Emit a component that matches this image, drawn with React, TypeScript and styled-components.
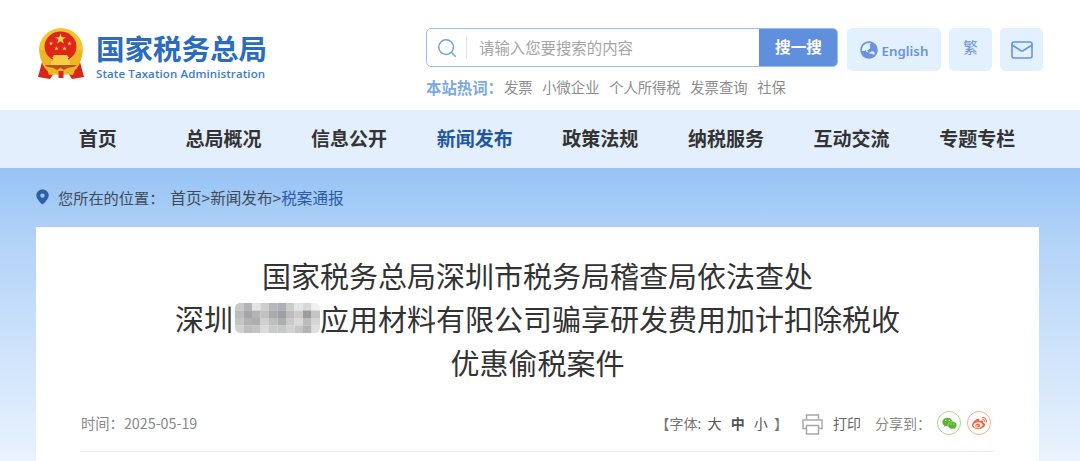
import styled, { createGlobalStyle } from "styled-components";
import { FaGlobeAsia, FaWeibo, FaWeixin } from "react-icons/fa";
import { Mail, Search } from "lucide-react";

const GlobalStyle = createGlobalStyle`
	html, body {
		margin: 0;
		padding: 0;
		height: 461px;
		overflow: hidden;
		background: #fff;
		font-family: "Liberation Sans", "Noto Sans CJK SC", sans-serif;
	}
	* {
		box-sizing: border-box;
	}
`;

const Page = styled.div`
	width: 1080px;
	height: 461px;
	overflow: hidden;
`;

const Header = styled.header`
	height: 110px;
	padding: 28px 36px 0 37px;
	display: flex;
	justify-content: space-between;
	background: #fff;
`;

const Logo = styled.div`
	display: flex;
	align-items: flex-start;
	gap: 11px;
`;

const LogoText = styled.div`
	display: flex;
	flex-direction: column;
	padding-top: 3px;
`;

const LogoTitle = styled.div`
	font-family: "Noto Sans CJK SC", sans-serif;
	font-weight: 700;
	font-size: 28.5px;
	line-height: 34px;
	color: #2b6cbc;
`;

const LogoSub = styled.div`
	margin-top: 1px;
	font-family: "Open Sans", sans-serif;
	font-size: 11.5px;
	font-weight: 600;
	line-height: 16px;
	letter-spacing: 0.1px;
	color: #3d7cc9;
	white-space: nowrap;
`;

const SearchArea = styled.div`
	width: 618px;
	display: flex;
	flex-direction: column;
`;

const TopRow = styled.div`
	display: flex;
	align-items: flex-start;
`;

const SearchBox = styled.div`
	width: 412px;
	height: 39px;
	border: 1px solid #9dbde8;
	border-radius: 5px;
	display: flex;
	align-items: center;
	overflow: hidden;
	margin-right: 9px;
`;

const SearchIcon = styled.div`
	width: 39px;
	height: 21px;
	display: flex;
	align-items: center;
	justify-content: center;
	border-right: 1px solid #e6e6e6;
	color: #6fa3de;
	margin-left: 1px;
`;

const Placeholder = styled.div`
	flex: 1;
	padding: 0 0 2px 12px;
	font-family: "Noto Sans CJK SC", sans-serif;
	font-size: 15.4px;
	color: #a5a5a5;
`;

const SearchButton = styled.button`
	width: 79px;
	height: 39px;
	margin-right: -1px;
	border: 0;
	padding: 0 0 2px;
	background: #5f8fdd;
	color: #fff;
	font-family: "Noto Sans CJK SC", sans-serif;
	font-size: 15.7px;
	font-weight: 700;
`;

const ToolButton = styled.div<{ $width: number }>`
	width: ${(p) => p.$width}px;
	height: 43px;
	margin-right: 8px;
	border-radius: 5px;
	background: #e3f0fe;
	color: #6b93dc;
	display: flex;
	align-items: center;
	justify-content: center;
	gap: 4px;
	&:last-child {
		margin-right: 0;
	}
`;

const EnglishLabel = styled.span`
	font-family: "Noto Sans", sans-serif;
	font-size: 13.3px;
	font-weight: 600;
	margin-top: 3px;
`;

const GlobeWrap = styled.span`
	display: flex;
	margin-top: 1px;
`;

const TradLabel = styled.span`
	font-family: "Noto Sans CJK TC", sans-serif;
	font-size: 14.5px;
	margin-top: -6px;
`;

const HotRow = styled.div`
	display: flex;
	align-items: center;
	margin-top: 3px;
	font-family: "Noto Sans CJK SC", sans-serif;
	font-size: 14.3px;
	line-height: 26px;
	color: #8c8c8c;
`;

const HotLabel = styled.span`
	color: #79a9e2;
	font-size: 15.4px;
	font-weight: 700;
	margin-right: 1px;
`;

const HotWord = styled.span`
	margin-right: 9.7px;
`;

const Nav = styled.nav`
	height: 58px;
	padding: 0 40px 0 35px;
	display: grid;
	grid-template-columns: repeat(8, 1fr);
	align-items: center;
	background: #e3effd;
`;

const NavItem = styled.a<{ $active?: boolean }>`
	text-align: center;
	font-family: "Noto Sans CJK SC", sans-serif;
	font-size: 19px;
	font-weight: 700;
	padding-bottom: 4px;
	color: ${(p) => (p.$active ? "#23569f" : "#333")};
`;

const Main = styled.main`
	height: 293px;
	padding: 0 41px 0 36px;
	background: linear-gradient(180deg, #96c3f4 0%, #b3d3f8 25%, #eaf3fd 100%);
`;

const Breadcrumb = styled.div`
	height: 59px;
	padding-bottom: 2px;
	display: flex;
	align-items: center;
	font-family: "Noto Sans CJK SC", sans-serif;
	font-size: 15.6px;
	color: #3f4a58;
`;

const Pin = styled.svg`
	margin-right: 9px;
`;

const CrumbLabel = styled.span`
	font-size: 15.2px;
	margin-right: 6px;
`;

const CrumbCurrent = styled.span`
	color: #2a5ca6;
`;

const Card = styled.section`
	height: 234px;
	padding: 27px 44px 0 44px;
	background: #fff;
`;

const Title = styled.h1`
	margin: 0;
	font-family: "Noto Sans CJK SC", sans-serif;
	font-size: 29px;
	font-weight: 400;
	line-height: 43.4px;
	text-align: center;
	color: #333;
`;

const Mosaic = styled.svg`
	display: inline-block;
	vertical-align: -2px;
	margin-left: 2px;
	border-radius: 5px;
`;

const Meta = styled.div`
	margin-top: 22px;
	height: 46px;
	display: flex;
	align-items: flex-start;
	justify-content: space-between;
	border-bottom: 1px solid #eeeeee;
	font-family: "Noto Sans CJK SC", sans-serif;
	font-size: 14px;
	line-height: 24px;
	color: #888;
	padding: 5px 4px 0 1px;
`;

const DateText = styled.span`
	font-size: 14.3px;
`;

const MetaTools = styled.div`
	display: flex;
	align-items: center;
`;

const FontSizes = styled.span`
	color: #777;
	margin-right: 14px;
`;

const FontSize = styled.b<{ $bold?: boolean }>`
	margin: 0 3px;
	font-weight: ${(p) => (p.$bold ? 700 : 400)};
	color: #555;
`;

const PrintSvg = styled.svg`
	margin-top: 3px;
`;

const PrintLabel = styled.span`
	margin: 0 14px 0 10px;
	color: #666;
`;

const ShareIcon = styled.span<{ $color: string; $border: string }>`
	width: 24px;
	height: 24px;
	margin-left: 6px;
	border-radius: 50%;
	border: 1px solid ${(p) => p.$border};
	color: ${(p) => p.$color};
	display: flex;
	align-items: center;
	justify-content: center;
`;

const NAV_ITEMS = ["首页", "总局概况", "信息公开", "新闻发布", "政策法规", "纳税服务", "互动交流", "专题专栏"];
const HOT_WORDS = ["发票", "小微企业", "个人所得税", "发票查询", "社保"];

// 打码区域的灰块
const MOSAIC_ROWS = [
	["#c9c9cb", "#b4b4b6", "#e2e5e8", "#cfccc9", "#b4b8bc", "#acb0b4", "#cbcbcb", "#e2e6ea", "#d8d8d8", "#efefef"],
	["#bbbbbd", "#a6a6a8", "#b4b4b4", "#c0c0c0", "#a8aaac", "#9ca0a4", "#bcbcbc", "#cccccc", "#9c9c9c", "#c4c4c4"],
	["#c4c4c4", "#b2b2b2", "#aeaeae", "#cfcfcf", "#bcbec0", "#acaeb0", "#cacaca", "#dcd8d4", "#bcbcbc", "#d4d4d4"],
	["#d0d0d0", "#bdbdbd", "#c3c3c3", "#dadada", "#cacaca", "#c8c8c8", "#d2d2d2", "#c6c6c6", "#b4b4b4", "#dedede"],
];

function starPoints(cx: number, cy: number, r: number) {
	const points: string[] = [];
	for (let i = 0; i < 10; i++) {
		const radius = i % 2 === 0 ? r : r * 0.4;
		const angle = (Math.PI / 5) * i - Math.PI / 2;
		points.push(`${cx + radius * Math.cos(angle)},${cy + radius * Math.sin(angle)}`);
	}
	return points.join(" ");
}

function Emblem() {
	return (
		<svg width="48" height="52" viewBox="0 0 48 52">
			<path d="M5 34 L1 49 L13 51 L17 45 L31 45 L35 51 L47 49 L43 34 Z" fill="#d9261c" />
			<ellipse cx="24" cy="22" rx="22" ry="22" fill="#f4c430" />
			<path d="M3 22 Q3 38 12 44 L36 44 Q45 38 45 22" fill="#eeb526" />
			<ellipse cx="23.5" cy="18.5" rx="16" ry="15" fill="#e0261c" />
			<polygon points={starPoints(23.5, 11, 5.6)} fill="#f8d648" />
			<polygon points={starPoints(14, 15.5, 2.3)} fill="#f8d648" />
			<polygon points={starPoints(32.5, 15.5, 2.3)} fill="#f8d648" />
			<polygon points={starPoints(19.5, 20.5, 2.3)} fill="#f8d648" />
			<polygon points={starPoints(27.5, 20.5, 2.3)} fill="#f8d648" />
			<path d="M17 27 h13 l2 3 h-1 v3 h2 v4 h-19 v-4 h2 v-3 h-1 Z" fill="#f6cf45" />
			<path d="M8 37 h32 l-3 2 q-6 0 -10 3 q-3 -2 -3.5 -2 q-0.5 0 -3.5 2 q-4 -3 -10 -3 Z" fill="#b5561c" />
			<path d="M10 41 q7 0 11 3 h6 q4 -3 11 -3 l-2 6 q-7 -1 -12 0 q-5 -1 -12 0 Z" fill="#f0b528" />
			<rect x="21.5" y="43" width="5" height="7" fill="#d9261c" />
		</svg>
	);
}

function PrintIcon() {
	return (
		<PrintSvg width="21" height="21" viewBox="0 0 21 21" fill="none" stroke="#a8a8a8" strokeWidth="1.5">
			<path d="M4.5 5.5 V1 H16.5 V5.5" />
			<path d="M4.5 14.5 H1 V6 H20 V14.5 H16.5" />
			<path d="M4.5 11.5 H16.5 V20 H4.5 Z" />
		</PrintSvg>
	);
}

export default function App() {
	return (
		<Page>
			<GlobalStyle />
			<Header>
				<Logo>
					<Emblem />
					<LogoText>
						<LogoTitle>国家税务总局</LogoTitle>
						<LogoSub>State Taxation Administration</LogoSub>
					</LogoText>
				</Logo>
				<SearchArea>
					<TopRow>
						<SearchBox>
							<SearchIcon>
								<Search size={22} strokeWidth={1.6} />
							</SearchIcon>
							<Placeholder>请输入您要搜索的内容</Placeholder>
							<SearchButton>搜一搜</SearchButton>
						</SearchBox>
						<ToolButton $width={94}>
							<GlobeWrap>
								<FaGlobeAsia size={18} />
							</GlobeWrap>
							<EnglishLabel>English</EnglishLabel>
						</ToolButton>
						<ToolButton $width={43}>
							<TradLabel>繁</TradLabel>
						</ToolButton>
						<ToolButton $width={43}>
							<Mail size={24} strokeWidth={1.6} />
						</ToolButton>
					</TopRow>
					<HotRow>
						<HotLabel>本站热词：</HotLabel>
						{HOT_WORDS.map((word) => (
							<HotWord key={word}>{word}</HotWord>
						))}
					</HotRow>
				</SearchArea>
			</Header>
			<Nav>
				{NAV_ITEMS.map((item) => (
					<NavItem key={item} $active={item === "新闻发布"}>
						{item}
					</NavItem>
				))}
			</Nav>
			<Main>
				<Breadcrumb>
					<Pin width="13" height="16" viewBox="0 0 13 16">
						<path
							fillRule="evenodd"
							d="M6.5 0.5 C3 0.5 0.3 3.2 0.3 6.5 C0.3 10.5 6.5 15.5 6.5 15.5 C6.5 15.5 12.7 10.5 12.7 6.5 C12.7 3.2 10 0.5 6.5 0.5 Z M6.5 4.4 a2.2 2.2 0 1 1 0 4.4 a2.2 2.2 0 1 1 0 -4.4 Z"
							fill="#2d5ea8"
						/>
					</Pin>
					<CrumbLabel>您所在的位置：</CrumbLabel>
					<span>首页&gt;新闻发布&gt;</span>
					<CrumbCurrent>税案通报</CrumbCurrent>
				</Breadcrumb>
				<Card>
					<Title>
						国家税务总局深圳市税务局稽查局依法查处
						<br />
						深圳
						<Mosaic width="85" height="30" viewBox="0 0 87 30" preserveAspectRatio="none">
							{MOSAIC_ROWS.map((row, y) =>
								row.map((color, x) => (
									<rect key={`${x}-${y}`} x={x * 8.7} y={y * 7.5} width="8.8" height="7.6" fill={color} />
								)),
							)}
						</Mosaic>
						应用材料有限公司骗享研发费用加计扣除税收
						<br />
						优惠偷税案件
					</Title>
					<Meta>
						<DateText>时间：2025-05-19</DateText>
						<MetaTools>
							<FontSizes>
								【字体:
								<FontSize> 大 </FontSize>
								<FontSize $bold> 中 </FontSize>
								<FontSize> 小 </FontSize>】
							</FontSizes>
							<PrintIcon />
							<PrintLabel>打印</PrintLabel>
							<span>分享到：</span>
							<ShareIcon $color="#5cb531" $border="#a5d98a">
								<FaWeixin size={15} />
							</ShareIcon>
							<ShareIcon $color="#f0683c" $border="#f9a98c">
								<FaWeibo size={15} />
							</ShareIcon>
						</MetaTools>
					</Meta>
				</Card>
			</Main>
		</Page>
	);
}
